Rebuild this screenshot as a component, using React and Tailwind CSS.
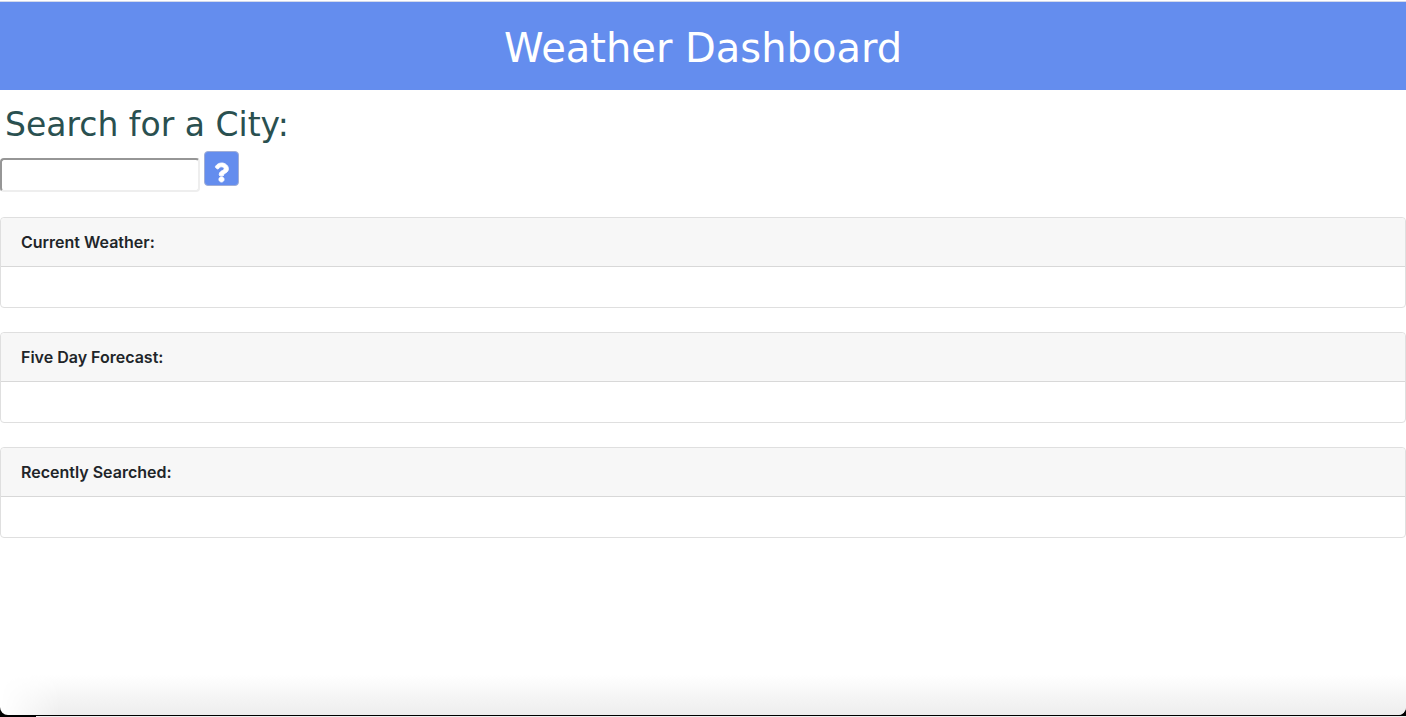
import { FaQuestion } from "react-icons/fa";

const sections = ["Current Weather:", "Five Day Forecast:", "Recently Searched:"];

function Card({ title }) {
  return (
    <section className="rounded-sm border border-[#dfdfdf] bg-white">
      <h3 className="rounded-t-sm border-b border-[#d8d8d8] bg-[#f7f7f7] px-5 py-3 text-base font-semibold text-[#212529]">
        {title}
      </h3>
      <div className="h-10" />
    </section>
  );
}

export default function App() {
  return (
    <div className="flex min-h-screen flex-col bg-black font-['Inter',sans-serif]">
      <div className="flex grow flex-col overflow-hidden rounded-b-lg bg-white">
        <header className="mt-px border-t border-[#d3d9ea] bg-[#648dee] pt-[22px] pb-[18px] text-center">
          <h1 className="font-['Verdana','DejaVu_Sans',sans-serif] text-[40px] leading-12 text-white">
            Weather Dashboard
          </h1>
        </header>
        <main>
          <form onSubmit={(e) => e.preventDefault()}>
            <h2 className="px-[5px] pt-4 font-['Verdana','DejaVu_Sans',sans-serif] text-[33px] leading-[38px] text-[#2a5050]">
              <label htmlFor="city">Search for a City:</label>
            </h2>
            <div className="flex items-start gap-1 pt-[7px]">
              <input
                id="city"
                type="text"
                className="mt-[7px] h-[34px] w-50 rounded-sm border-2 border-t-[#969696] border-r-[#eeeeee] border-b-[#eeeeee] border-l-[#969696] px-2 text-base outline-none"
              />
              <button
                type="submit"
                aria-label="Search"
                className="flex h-[35px] w-[35px] items-end justify-center rounded-sm border border-[#a0aed6] bg-[#648dee] pb-[3px] text-white"
              >
                <FaQuestion size={19} className="overflow-visible stroke-white stroke-[24px]" />
              </button>
            </div>
          </form>
          <div className="flex flex-col gap-6 pt-[25px]">
            {sections.map((title) => (
              <Card key={title} title={title} />
            ))}
          </div>
        </main>
        <div className="mt-auto h-10 bg-linear-to-b from-white to-[#ededed] mask-l-from-[calc(100%-60px)] mask-l-to-100%" />
      </div>
      <div className="h-0.5 pl-9 pt-px">
        <div className="h-px bg-[#eeeeee]" />
      </div>
    </div>
  );
}
